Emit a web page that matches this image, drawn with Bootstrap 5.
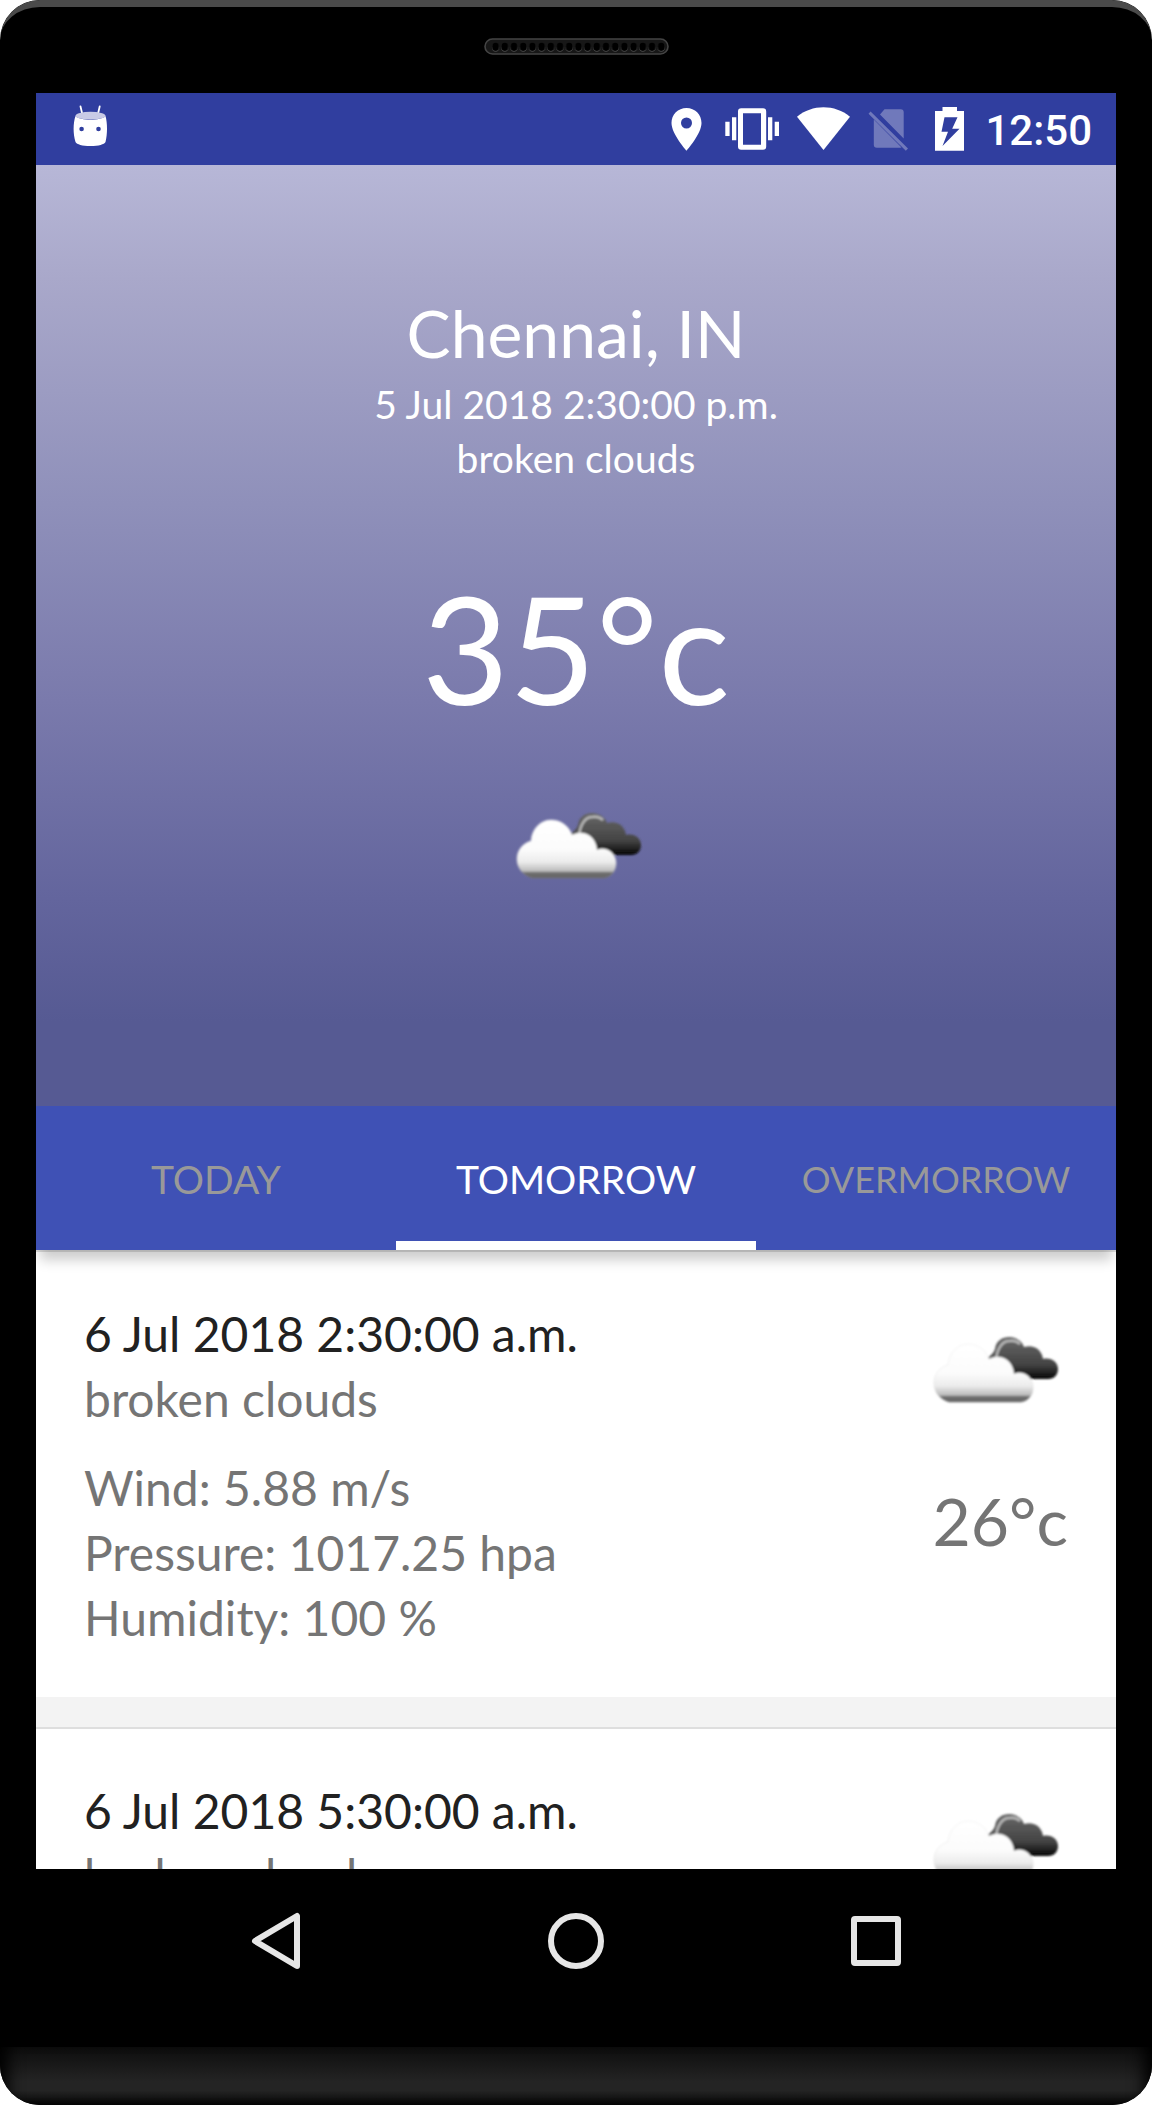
<!DOCTYPE html>
<html lang="en">
<head>
<meta charset="utf-8">
<meta name="viewport" content="width=device-width, initial-scale=1">
<title>Weather forecast</title>
<link href="https://cdn.jsdelivr.net/npm/bootstrap@5.3.0/dist/css/bootstrap.min.css" rel="stylesheet">
<style>
  body { font-family: Lato, sans-serif; background: #fff; }
  .device { height: 100vh; background: #000; border-radius: 40px; overflow: hidden; }
  .device::before { content: ""; position: absolute; inset: 0; border-radius: 40px; border-top: 7px solid #4a4a4a; pointer-events: none; }
  .earpiece { height: 93px; }
  .screen { margin: 0 36px; min-height: 0; }
  .status-strip { background: #303e9f; height: 72px; padding: 0 24px 0 30px; gap: 12px; }
  .clock { font: 500 42px/48px Roboto, sans-serif; padding-top: 4px; }
  .hero { padding: 128px 24px 215px; background: linear-gradient(#b7b7d7, #a9a8ca 12%, #8f90ba 36%, #7a7aac 57%, #63659d 78%, #565a93 91%, #565a93); }
  .city, .degrees { font-size: 66px; line-height: 80px; }
  .city { margin-bottom: 4px; }
  .when { font-size: 39px; line-height: 54px; }
  .now { font-size: 150px; line-height: 180px; margin: 72px 0 64px; }
  .day-tabs { background: #3f51b5; height: 144px; box-shadow: 0 14px 12px -4px rgba(0,0,0,.2); z-index: 1; }
  .day-tabs .nav-link { height: 144px; padding: 10px 0 0; background: transparent; border: 0; border-bottom: 9px solid transparent; color: #999; font-size: 39px; line-height: 48px; border-radius: 0; }
  .day-tabs .nav-link.active { color: #fff; background: transparent; border-color: #fff; }
  .day-tabs .nav-link.long { font-size: 36px; }
  .forecast { min-height: 0; background: #f3f3f3; }
  .slot { background: #fff; border-top: 2px solid #dedede; padding: 49px 48px 47px; margin-bottom: 30px; font-size: 48px; line-height: 65px; color: #757575; }
  .slot-date { color: #212121; }
  .facts { margin-top: 24px; }
  .side { padding-top: 24px; gap: 66px; }
  .keys { height: 144px; margin-bottom: 34px; }
  .keys button { width: 300px; }
  .chin { height: 58px; background: linear-gradient(#0d0d0d, #242424 60%, #242424 75%, #050505); box-shadow: inset 20px 0 16px -12px #000, inset -20px 0 16px -12px #000; }
</style>
</head>
<body>
<svg width="0" height="0" class="position-absolute" aria-hidden="true">
  <defs>
    <linearGradient id="dark" x1="0" y1="0" x2="0" y2="1"><stop offset="0" stop-color="#686868"/><stop offset=".65" stop-color="#444"/><stop offset=".85" stop-color="#222"/><stop offset="1" stop-color="#000"/></linearGradient>
    <linearGradient id="light" x1="0" y1="0" x2="0" y2="1"><stop offset="0" stop-color="#fff"/><stop offset=".5" stop-color="#fcfcfc"/><stop offset=".72" stop-color="#ececec"/><stop offset=".88" stop-color="#bcbcbc"/><stop offset=".91" stop-color="#6c6c6c"/><stop offset="1" stop-color="#666"/></linearGradient>
    <linearGradient id="rim" x1="0" y1="0" x2="0" y2="1"><stop offset="0" stop-color="#eee"/><stop offset=".75" stop-color="#ddd"/><stop offset="1" stop-color="#777"/></linearGradient>
    <filter id="soft" x="-10%" y="-10%" width="120%" height="120%"><feGaussianBlur stdDeviation=".8"/></filter>
    <symbol id="clouds" viewBox="0 0 150 90">
      <g filter="url(#soft)">
        <path fill="url(#dark)" d="M69 33C74 30 76 27 77 24C79 8 102 9 106 22C116 19 124 25 125 34C133 32 140 37 140 44C140 50 136 54 130 54H100L70 45Z"/>
        <path fill="none" stroke="#b8b8b8" stroke-width="2.5" d="M78 35C79 24 84 16 91 16C96 15 99 16 102 19"/>
        <path fill="url(#light)" stroke="url(#rim)" stroke-width=".6" d="M31 77C21 74 16 66 16 58C16 49 22 42 30 40C31 27 40 19 50 19C60 19 68 25 71 34C84 28 95 36 96 49C105 45 115 52 115 62C115 69 111 76 103 77Z"/>
      </g>
    </symbol>
  </defs>
</svg>

<div class="device position-relative d-flex flex-column">
  <div class="earpiece d-flex align-items-center justify-content-center flex-shrink-0">
    <svg width="185" height="17" viewBox="0 0 185 17" aria-hidden="true">
      <defs><pattern id="holes" x="7" width="9.2" height="17" patternUnits="userSpaceOnUse"><ellipse cx="4.6" cy="9.5" rx="3.7" ry="4.3" fill="#4c4c4c"/><ellipse cx="4.6" cy="8.8" rx="3.5" ry="4.1" fill="#000"/></pattern></defs>
      <rect x="1" y="1" width="183" height="15" rx="7.5" fill="#171717" stroke="#444" stroke-width="1.6"/>
      <rect x="7" width="174" height="17" fill="url(#holes)"/>
    </svg>
  </div>

  <main class="screen d-flex flex-column flex-grow-1 overflow-hidden">
    <div class="status-strip d-flex align-items-center text-white flex-shrink-0">
      <svg class="me-auto" width="48" height="48" viewBox="0 0 48 48" aria-hidden="true">
        <path d="M14.500 1.500 16.500 10M33.700 1.500 31.700 10" stroke="#fff" stroke-width="1.8" stroke-linecap="round"/>
        <path fill="#fff" d="M9.500 11C14 16 35 16 39.500 11C41.500 18 41.500 29 39.500 37C38 39.500 33 41 24.500 41S11 39.500 9.500 37C7 29 7 18 9.500 11Z"/>
        <ellipse cx="24.500" cy="10.700" rx="15" ry="3.900" fill="#c9cbe6"/>
        <circle cx="15.600" cy="24" r="2.300" fill="#303e9f"/><circle cx="32.500" cy="24" r="2.300" fill="#303e9f"/>
      </svg>
      <svg width="48" height="48" viewBox="-1 0 48 48" fill="#fff" aria-label="Location"><path fill-rule="evenodd" d="M24.500 3C16 3 9.500 9.500 9.500 18C9.500 29 24.500 45.700 24.500 45.700S39.500 29 39.500 18C39.500 9.500 33 3 24.500 3ZM24.500 12.500A5.500 5.500 0 1 1 24.500 23.500A5.500 5.500 0 1 1 24.500 12.500Z"/></svg>
      <svg width="60" height="48" viewBox="-1 0 60 48" fill="#fff" aria-label="Vibrate"><path d="M3.300 16.700H7.600V31H3.300ZM10 12.300H14.300V35.300H10ZM46 12.300H50.300V35.300H46ZM52.700 16.700H57V31H52.700Z"/><path fill-rule="evenodd" d="M19.200 3.300H41A3.200 3.200 0 0 1 44.200 6.500V41.500A3.200 3.200 0 0 1 41 44.700H19.200A3.200 3.200 0 0 1 16 41.500V6.500A3.200 3.200 0 0 1 19.200 3.300ZM21 8.300V39.700H39V8.300Z"/></svg>
      <svg width="60" height="48" viewBox="-1 0 60 48" fill="#fff" aria-label="Wi-Fi"><path d="M3 11.700C18-1 41-1 56 11.700L29.500 45Z"/></svg>
      <svg width="48" height="48" viewBox="-1 0 48 48" fill="#7079bb" aria-label="No SIM"><path d="M18.500 4.300H34.700A3 3 0 0 1 37.700 7.300V33.500L14 9.500ZM7.800 14.500 35.500 42.500 34 42.700H10.800A3 3 0 0 1 7.800 39.700ZM4.600 6.400 42 43.400 39.800 45.700 2.500 8.700Z"/></svg>
      <svg width="48" height="48" viewBox="-1 0 48 48" fill="#fff" aria-label="Charging"><path fill-rule="evenodd" d="M16.500 2H31V6H38V45.700H9V6H16.500ZM18.500 12.300 15.500 26.700H22L16.500 41 33.500 23.700H26.200L31.500 12.300Z"/></svg>
      <span class="clock">12:50</span>
    </div>

    <section class="hero text-center text-white d-flex flex-column align-items-center flex-shrink-0">
      <h1 class="city fw-normal mt-0">Chennai, IN</h1>
      <div class="when">5 Jul 2018 2:30:00 p.m.</div>
      <div class="when">broken clouds</div>
      <div class="now">35°c</div>
      <svg width="150" height="90" role="img" aria-label="broken clouds"><use href="#clouds"/></svg>
    </section>

    <ul class="day-tabs nav nav-justified position-relative flex-nowrap flex-shrink-0" role="tablist">
      <li class="nav-item col-4"><button class="nav-link w-100" type="button" role="tab">TODAY</button></li>
      <li class="nav-item col-4"><button class="nav-link w-100 active" type="button" role="tab" aria-selected="true">TOMORROW</button></li>
      <li class="nav-item col-4"><button class="nav-link w-100 long" type="button" role="tab">OVERMORROW</button></li>
    </ul>

    <section class="forecast flex-grow-1 overflow-hidden">
      <article class="slot d-flex justify-content-between">
        <div>
          <div class="slot-date">6 Jul 2018 2:30:00 a.m.</div>
          <div>broken clouds</div>
          <div class="facts">
            <div>Wind: 5.88 m/s</div>
            <div>Pressure: 1017.25 hpa</div>
            <div>Humidity: 100 %</div>
          </div>
        </div>
        <div class="side d-flex flex-column align-items-end">
          <svg width="150" height="90" role="img" aria-label="broken clouds"><use href="#clouds"/></svg>
          <div class="degrees">26°c</div>
        </div>
      </article>
      <article class="slot d-flex justify-content-between">
        <div>
          <div class="slot-date">6 Jul 2018 5:30:00 a.m.</div>
          <div>broken clouds</div>
        </div>
        <div class="side d-flex flex-column align-items-end">
          <svg width="150" height="90" role="img" aria-label="broken clouds"><use href="#clouds"/></svg>
        </div>
      </article>
    </section>
  </main>

  <nav class="keys d-flex justify-content-center flex-shrink-0" aria-label="System">
    <button type="button" class="btn border-0 p-0" aria-label="Back"><svg width="60" height="60" viewBox="0 0 60 60" fill="none" stroke="#e6e6e6" stroke-width="6" stroke-linejoin="round"><path d="M51 5V55L9 30Z"/></svg></button>
    <button type="button" class="btn border-0 p-0" aria-label="Home"><svg width="60" height="60" viewBox="0 0 60 60" fill="none" stroke="#e6e6e6" stroke-width="6"><circle cx="30" cy="30" r="25"/></svg></button>
    <button type="button" class="btn border-0 p-0" aria-label="Recent apps"><svg width="60" height="60" viewBox="0 0 60 60" fill="none" stroke="#e6e6e6" stroke-width="6"><rect x="8" y="8" width="44" height="44" rx="1"/></svg></button>
  </nav>
  <div class="chin flex-shrink-0"></div>
</div>
<script src="https://cdn.jsdelivr.net/npm/bootstrap@5.3.0/dist/js/bootstrap.bundle.min.js"></script>
</body>
</html>
